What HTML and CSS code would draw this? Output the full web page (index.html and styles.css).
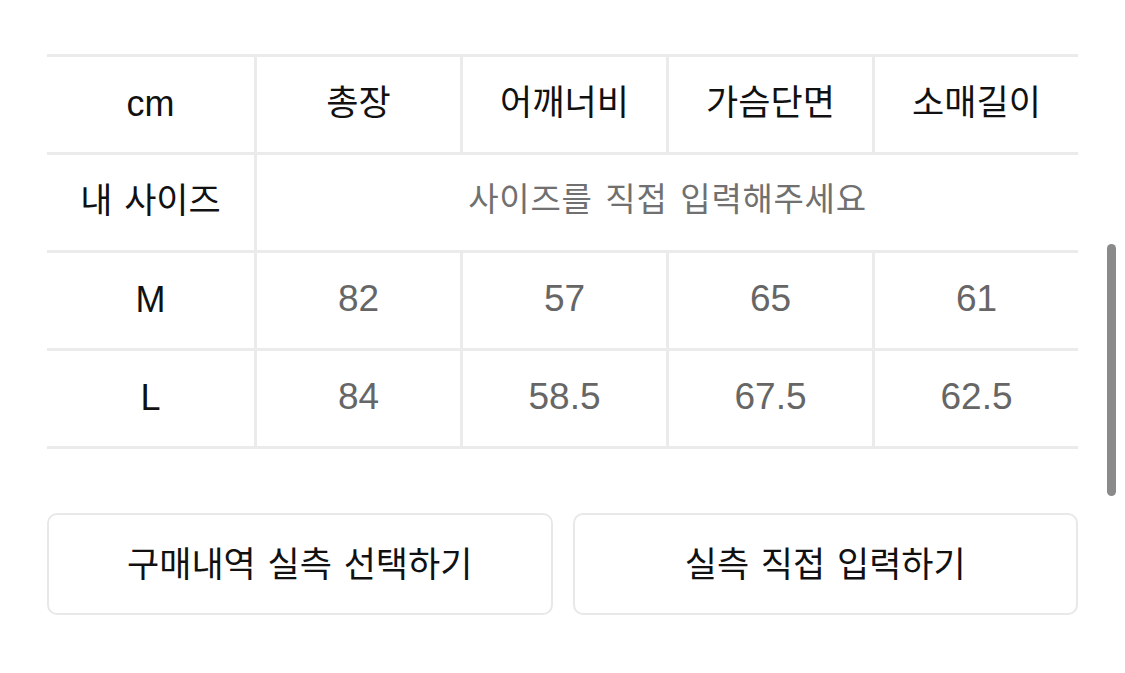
FILE: index.html
```html
<!DOCTYPE html>
<html lang="ko">
<head>
<meta charset="utf-8">
<link rel="stylesheet" href="styles.css">
</head>
<body>
<div class="page">
  <div class="size-table">
    <div class="cell head latin">cm</div>
    <div class="cell head">총장</div>
    <div class="cell head">어깨너비</div>
    <div class="cell head">가슴단면</div>
    <div class="cell head">소매길이</div>

    <div class="cell head">내 사이즈</div>
    <div class="cell hint span4">사이즈를 직접 입력해주세요</div>

    <div class="cell head latin">M</div>
    <div class="cell val">82</div>
    <div class="cell val">57</div>
    <div class="cell val">65</div>
    <div class="cell val">61</div>

    <div class="cell head latin">L</div>
    <div class="cell val">84</div>
    <div class="cell val">58.5</div>
    <div class="cell val">67.5</div>
    <div class="cell val">62.5</div>
  </div>

  <div class="actions">
    <button class="btn">구매내역 실측 선택하기</button>
    <button class="btn">실측 직접 입력하기</button>
  </div>
</div>
<div class="scrollbar"></div>
</body>
</html>
```

FILE: styles.css
```css
* { box-sizing: border-box; }
html, body {
  margin: 0;
  padding: 0;
  background: #ffffff;
}
body {
  width: 1125px;
  height: 673px;
  overflow: hidden;
  position: relative;
  font-family: "Liberation Sans", "Noto Sans CJK KR", sans-serif;
}
.page {
  padding: 54px 0 0 47px;
  width: 1078px;
}
.size-table {
  display: grid;
  grid-template-columns: 207px repeat(4, 1fr);
  grid-auto-rows: 95px;
  gap: 3px;
  padding: 3px 0;
  background: #ebebeb;
}
.cell {
  background: #ffffff;
  display: flex;
  align-items: center;
  justify-content: center;
  line-height: 1;
}
.head {
  color: #111111;
  font-weight: 400;
  font-size: 35px;
  word-spacing: 2px;
  padding-bottom: 5px;
}
.head.latin {
  font-size: 36px;
  padding-bottom: 2px;
}
.val {
  color: #666666;
  font-size: 37px;
  padding-bottom: 5px;
}
.hint {
  color: #707070;
  font-size: 33px;
  letter-spacing: 0.7px;
  word-spacing: 3px;
  font-weight: 400;
  padding-bottom: 6px;
}
.span4 {
  grid-column: span 4;
}
.actions {
  display: flex;
  gap: 20px;
  margin-top: 64px;
}
.btn {
  flex: 1;
  height: 102px;
  background: #ffffff;
  border: 2px solid #e8e8e8;
  border-radius: 10px;
  font-family: "Liberation Sans", "Noto Sans CJK KR", sans-serif;
  font-size: 35px;
  word-spacing: 2px;
  color: #111111;
  padding: 0 0 6px 0;
}
.scrollbar {
  position: absolute;
  left: 1107px;
  top: 244px;
  width: 9px;
  height: 252px;
  border-radius: 5px;
  background: #8a8a8a;
}
```
